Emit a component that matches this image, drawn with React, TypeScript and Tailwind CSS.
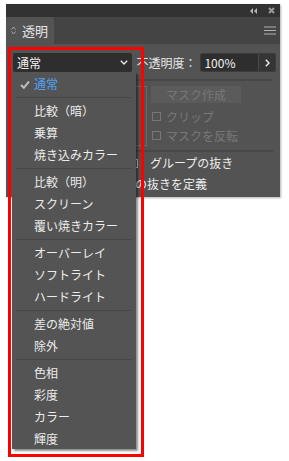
import React from 'react';

const font = { fontFamily: '"Noto Sans CJK JP", "Noto Sans", sans-serif' };

type Item = { label: string; checked?: boolean } | 'sep';

const blendModes: Item[] = [
    { label: '通常', checked: true },
    'sep',
    { label: '比較（暗）' },
    { label: '乗算' },
    { label: '焼き込みカラー' },
    'sep',
    { label: '比較（明）' },
    { label: 'スクリーン' },
    { label: '覆い焼きカラー' },
    'sep',
    { label: 'オーバーレイ' },
    { label: 'ソフトライト' },
    { label: 'ハードライト' },
    'sep',
    { label: '差の絶対値' },
    { label: '除外' },
    'sep',
    { label: '色相' },
    { label: '彩度' },
    { label: 'カラー' },
    { label: '輝度' },
];

const Checkbox: React.FC<{ dim?: boolean }> = ({ dim }) => (
    <span
        className={`inline-block w-[9px] h-[9px] border ${dim ? 'border-[#777777]' : 'border-[#cfcfcf]'} shrink-0`}
    />
);

const BlendMenu: React.FC = () => (
    <div className="absolute left-[12px] top-[72px] w-[124px] h-[377px] bg-[#545454] shadow-[2px_2px_2px_rgba(0,0,0,0.45)] pt-[1px]">
        {blendModes.map((item, i) =>
            item === 'sep' ? (
                <div key={i} className="h-[5px] flex items-center px-[4px]">
                    <div className="h-[1px] w-full bg-[#464646]" />
                </div>
            ) : (
                <div key={i} className="h-[22px] flex items-center text-[12px] leading-none">
                    <span className="w-[22px] flex justify-center pl-[4px]">
                        {item.checked && (
                            <svg width="10" height="9" viewBox="0 0 10 9">
                                <path d="M1 5 L3.8 7.8 L9 1.5" stroke="#bdbdbd" strokeWidth="2" fill="none" />
                            </svg>
                        )}
                    </span>
                    <span className={item.checked ? 'text-[#4fa3f7]' : 'text-[#ececec]'}>{item.label}</span>
                </div>
            )
        )}
    </div>
);

export default function App() {
    return (
        <div className="relative w-[289px] h-[461px] bg-white overflow-hidden" style={font}>
            <div className="pt-[4px] pl-[6px]">
                <div className="w-[274px] h-[193px] bg-[#535353] flex flex-col shadow-[1px_1px_2px_rgba(0,0,0,0.3)]">
                    {/* title bar */}
                    <div className="h-[13px] bg-[#323232] flex items-center justify-end gap-[11px] pr-[5px]">
                        <svg width="7" height="6" viewBox="0 0 7 6">
                            <path d="M3 0 L0 3 L3 6 Z M7 0 L4 3 L7 6 Z" fill="#b5b5b5" />
                        </svg>
                        <svg width="7" height="7" viewBox="0 0 7 7">
                            <path d="M1 1 L6 6 M6 1 L1 6" stroke="#9a9a9a" strokeWidth="2" />
                        </svg>
                    </div>
                    {/* tab row */}
                    <div className="h-[27px] bg-[#444444] flex items-stretch">
                        <div className="w-[48px] bg-[#535353] flex items-center pl-[5px] gap-[6px]">
                            <svg width="5" height="9" viewBox="0 0 5 9">
                                <path d="M0.5 3.5 L2.5 1 L4.5 3.5 M0.5 5.5 L2.5 8 L4.5 5.5" stroke="#a8a8a8" strokeWidth="1" fill="none" />
                            </svg>
                            <span className="text-[13px] text-[#e6e6e6] leading-none">透明</span>
                        </div>
                        <div className="flex-1 flex items-center justify-end pr-[4px]">
                            <svg width="12" height="9" viewBox="0 0 12 9">
                                <path d="M0 1 H12 M0 4.5 H12 M0 8 H12" stroke="#b0b0b0" strokeWidth="1" />
                            </svg>
                        </div>
                    </div>
                    {/* content */}
                    <div className="flex-1 flex flex-col">
                        <div className="flex items-center h-[19px] mt-[9px] pl-[7px] pr-[4px]">
                            <div className="w-[120px] h-[19px] bg-[#2e2e2e] rounded-[2px] flex items-center justify-between px-[4px]">
                                <span className="text-[12px] text-[#f0f0f0] leading-none">通常</span>
                                <svg width="8" height="5" viewBox="0 0 8 5">
                                    <path d="M0.8 0.8 L4 4 L7.2 0.8" stroke="#e8e8e8" strokeWidth="1.4" fill="none" />
                                </svg>
                            </div>
                            <span className="ml-[4px] text-[12px] text-[#e6e6e6] leading-none whitespace-nowrap">不透明度：</span>
                            <div className="ml-[4px] flex h-[19px] border border-[#3c3c3c] rounded-[2px] overflow-hidden">
                                <div className="w-[57px] bg-[#2e2e2e] flex items-center pl-[3px] text-[12px] text-[#f2f2f2] leading-none">
                                    100%
                                </div>
                                <div className="w-[17px] bg-[#353535] border-l border-[#4a4a4a] flex items-center justify-center">
                                    <svg width="5" height="8" viewBox="0 0 5 8">
                                        <path d="M0.8 0.8 L4 4 L0.8 7.2" stroke="#eeeeee" strokeWidth="1.4" fill="none" />
                                    </svg>
                                </div>
                            </div>
                        </div>
                        <div className="mx-[7px] mt-[7px] h-[2px] bg-[#484848]" />
                        <div className="flex mt-[5px] pl-[89px]">
                            <div className="w-[52px] h-[60px] border border-[#6a6a6a]" />
                            <div className="ml-[4px] flex flex-col">
                                <div className="w-[90px] h-[17px] bg-[#5b5b5b] flex items-center justify-center text-[12px] text-[#777777] leading-none">
                                    マスク作成
                                </div>
                                <div className="flex items-center gap-[5px] h-[19px] mt-[4px] pl-[1px]">
                                    <Checkbox dim />
                                    <span className="text-[12px] text-[#777777] leading-none">クリップ</span>
                                </div>
                                <div className="flex items-center gap-[5px] h-[19px] pl-[1px]">
                                    <Checkbox dim />
                                    <span className="text-[12px] text-[#777777] leading-none">マスクを反転</span>
                                </div>
                            </div>
                        </div>
                        <div className="mx-[7px] mt-[4px] h-[2px] bg-[#484848]" />
                        <div className="flex items-center h-[20px] mt-[1px] pl-[123px] gap-[12px]">
                            <Checkbox />
                            <span className="text-[12px] text-[#ececec] leading-none">グループの抜き</span>
                        </div>
                        <div className="flex items-center h-[21px] pl-[20px] gap-[4px]">
                            <Checkbox />
                            <span className="text-[12px] text-[#ececec] leading-none whitespace-nowrap">不透明度とマスクの抜きを定義</span>
                        </div>
                    </div>
                </div>
            </div>
            <BlendMenu />
            <div className="absolute left-[8px] top-[47px] w-[136px] h-[410px] border-[3px] border-[#ff0000]" />
        </div>
    );
}
